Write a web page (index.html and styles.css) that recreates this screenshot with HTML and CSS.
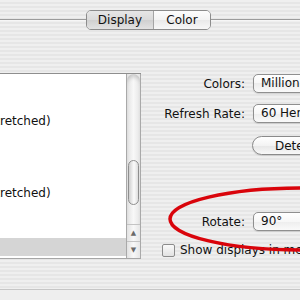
FILE: index.html
```html
<!DOCTYPE html>
<html lang="en">
<head>
    <meta charset="UTF-8">
    <title>Displays</title>
    <link rel="stylesheet" href="styles.css">
</head>
<body>
<div class="window">
    <div class="tabbar">
        <div class="tabs">
            <div class="tab tab-active">Display</div>
            <div class="tab">Color</div>
        </div>
    </div>

    <div class="main">
        <div class="list">
            <div class="rows">
                <div class="row">512 x 384</div>
                <div class="row">640 x 480</div>
                <div class="row">640 x 480 (stretched)</div>
                <div class="row">720 x 480</div>
                <div class="row">720 x 576</div>
                <div class="row">800 x 600</div>
                <div class="row">800 x 600 (stretched)</div>
                <div class="row">832 x 624</div>
                <div class="row">848 x 480</div>
                <div class="row row-selected">1024 x 768</div>
            </div>
            <div class="scrollbar">
                <div class="track">
                    <div class="thumb"></div>
                </div>
                <div class="arrow">&#9650;</div>
                <div class="arrow">&#9660;</div>
            </div>
        </div>

        <div class="settings">
            <div class="field">
                <span class="label">Colors:</span>
                <div class="popup">Millions</div>
            </div>
            <div class="field">
                <span class="label">Refresh Rate:</span>
                <div class="popup">60 Hertz</div>
            </div>
            <div class="field field-button">
                <span class="label"></span>
                <button class="btn">Detect Displays</button>
            </div>
            <div class="field field-rotate">
                <span class="label">Rotate:</span>
                <div class="popup">90°</div>
            </div>
            <div class="check">
                <span class="box"></span>
                <span>Show displays in menu bar</span>
            </div>
        </div>
    </div>

    <div class="footer"></div>

    <svg class="mark" width="300" height="300" viewBox="0 0 300 300">
        <ellipse cx="302" cy="219" rx="132" ry="31" fill="none" stroke="#d9040b" stroke-width="3.5"/>
    </svg>
</div>
</body>
</html>
```

FILE: styles.css
```css
body {
    margin: 0;
    font-family: "DejaVu Sans", "Lucida Grande", sans-serif;
    font-size: 12px;
    color: #111;
}

.window {
    position: relative;
    width: 300px;
    height: 300px;
    overflow: hidden;
    background: repeating-linear-gradient(#efefef 0 2px, #e6e6e6 2px 4px);
}

.tabbar {
    padding-top: 10px;
    height: 20px;
    background: linear-gradient(transparent 19px, #9c9c9c 19px 20px, #f6f6f6 20px 21px, transparent 21px) no-repeat;
}

.tabs {
    display: flex;
    margin-left: 86px;
    width: 125px;
    height: 20px;
    box-sizing: border-box;
    border: 1px solid #8c8c8c;
    border-radius: 5px;
    overflow: hidden;
}

.tab {
    display: flex;
    align-items: center;
    justify-content: center;
    width: 57px;
    background: linear-gradient(#fdfdfd, #f3f3f3 50%, #e9e9e9 50%, #f7f7f7);
}

.tab-active {
    width: 67px;
    border-right: 1px solid #a4a4a4;
    background: linear-gradient(#e6e6e6, #dadada 50%, #cfcfcf 50%, #e2e2e2);
}

.main {
    display: flex;
    margin-top: 43px;
}

.list {
    flex: none;
    display: flex;
    margin-left: -100px;
    width: 241px;
    height: 186px;
    box-sizing: border-box;
    border-top: 1px solid #8e8e8e;
    border-bottom: 1px solid #a6a6a6;
}

.rows {
    flex: 1;
    padding-top: 2px;
    background: #fff;
}

.row {
    height: 18px;
    line-height: 18px;
    padding-left: 20px;
    white-space: nowrap;
}

.row-selected {
    background: #d5d5d5;
}

.scrollbar {
    flex: none;
    display: flex;
    flex-direction: column;
    width: 15px;
    box-sizing: border-box;
    border-left: 1px solid #a9a9a9;
    border-right: 1px solid #a9a9a9;
    background: linear-gradient(90deg, #e2e2e2, #f8f8f8 50%, #e6e6e6);
}

.track {
    flex: 1;
    position: relative;
    border-radius: 7px 7px 0 0;
    box-shadow: inset 0 5px 4px -2px rgba(0, 0, 0, 0.18);
}

.thumb {
    position: absolute;
    left: 1px;
    right: 1px;
    top: 86px;
    height: 45px;
    box-sizing: border-box;
    border: 1px solid #8f8f8f;
    border-radius: 6px;
    background: linear-gradient(90deg, #cfcfcf, #fbfbfb 55%, #dedede);
}

.arrow {
    height: 16px;
    line-height: 16px;
    text-align: center;
    font-size: 7px;
    color: #6a6a6a;
    border-top: 1px solid #c4c4c4;
}

.settings {
    flex: none;
    display: flex;
    flex-direction: column;
    padding-top: 1px;
}

.field {
    display: grid;
    grid-template-columns: 104px 140px;
    column-gap: 8px;
    align-items: center;
}

.field + .field {
    margin-top: 11px;
}

.field-button {
    margin-top: 13px !important;
}

.field-rotate {
    margin-top: 57px !important;
}

.label {
    text-align: right;
    white-space: nowrap;
}

.popup {
    height: 19px;
    line-height: 17px;
    box-sizing: border-box;
    padding-left: 7px;
    border: 1px solid #8f8f8f;
    border-radius: 5px;
    background: linear-gradient(#ffffff, #f7f7f7 50%, #ededed 50%, #fafafa);
    box-shadow: 0 1px 1px rgba(0, 0, 0, 0.12);
}

.btn {
    margin-left: -1px;
    height: 19px;
    padding: 0 0 0 22px;
    text-align: left;
    font: inherit;
    color: inherit;
    border: 1px solid #8a8a8a;
    border-radius: 10px;
    background: linear-gradient(#ffffff, #f3f3f3 50%, #e6e6e6 50%, #f8f8f8);
    box-shadow: 0 1px 1px rgba(0, 0, 0, 0.12);
}

.check {
    display: flex;
    align-items: center;
    gap: 5px;
    margin-top: 12px;
    padding-left: 21px;
    white-space: nowrap;
}

.box {
    flex: none;
    width: 13px;
    height: 13px;
    box-sizing: border-box;
    border: 1px solid #8c8c8c;
    border-radius: 2px;
    background: linear-gradient(#fafafa, #e2e2e2);
}

.footer {
    margin-top: 30px;
    border-top: 1px solid #c6c6c6;
    height: 10px;
    background: #eeeeee;
}

.mark {
    position: absolute;
    left: 0;
    top: 0;
    pointer-events: none;
}
```
